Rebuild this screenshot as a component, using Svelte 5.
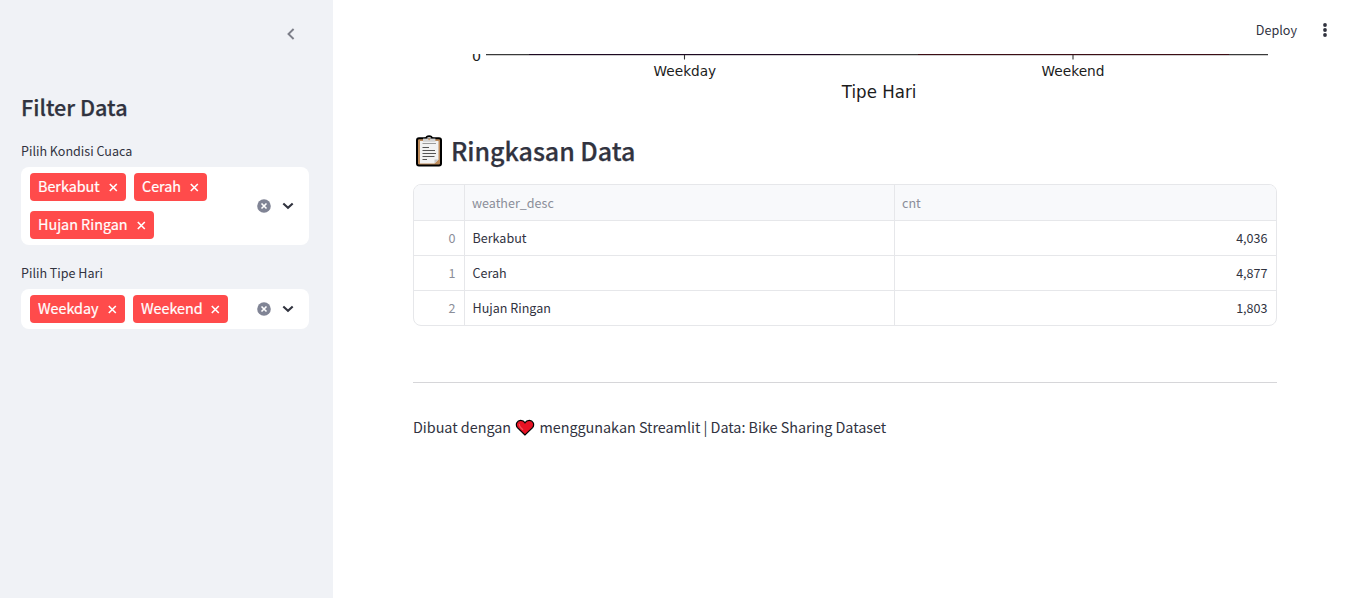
<script>
  const filters = [
    { label: 'Pilih Kondisi Cuaca', tags: [['Berkabut', 96], ['Cerah', 73], ['Hujan Ringan', 124]] },
    { label: 'Pilih Tipe Hari', tags: [['Weekday', 95], ['Weekend', 95]] }
  ];
  const rows = [
    ['Berkabut', '4,036'],
    ['Cerah', '4,877'],
    ['Hujan Ringan', '1,803']
  ];
</script>

<div class="app">
  <aside>
    <div class="collapse">
      <svg width="20" height="20" viewBox="0 0 20 20"><path d="M12.6 5 7.5 10l5.1 5" fill="none" stroke="#7d7f89" stroke-width="1.9" /></svg>
    </div>
    <h2>Filter Data</h2>
    {#each filters as f}
      <section class="filter">
        <div class="label">{f.label}</div>
        <div class="select">
          <div class="tags">
            {#each f.tags as [name, width]}
              <span class="tag" style="width: {width}px">
                <span>{name}</span>
                <svg width="9" height="9" viewBox="0 0 9 9"><path d="M.8 1l7 7M7.8 1l-7 7" stroke="#fff" stroke-width="1.6" /></svg>
              </span>
            {/each}
          </div>
          <svg class="clear" width="14" height="14" viewBox="0 0 14 14"><circle cx="7" cy="7" r="6.8" fill="#808495" /><path d="M4.5 4.5l5 5M9.5 4.5l-5 5" stroke="#fff" stroke-width="1.6" /></svg>
          <svg class="chevron" width="12" height="8" viewBox="0 0 12 8"><path d="M1.3 1.4 6 5.8l4.7-4.4" fill="none" stroke="#31333f" stroke-width="2.1" /></svg>
        </div>
      </section>
    {/each}
  </aside>

  <main>
    <header>
      <span>Deploy</span>
      <svg width="6" height="16" viewBox="0 0 6 16"><g fill="#31333f"><circle cx="3" cy="3" r="1.9" /><circle cx="3" cy="8" r="1.9" /><circle cx="3" cy="13" r="1.9" /></g></svg>
    </header>
    <div class="content">
      <svg class="chart" width="864" height="60" viewBox="413 54 864 60">
        <path d="M486 54.6H1268" stroke="#3a3a3a" stroke-width="1.2" />
        <path d="M529 54.5H840" stroke="#1d0822" />
        <path d="M918 54.5H1229" stroke="#3d0d14" />
        <path d="M684.5 55v4.6M1073 55v4.6" stroke="#333" stroke-width="1.1" />
        <g fill="#1c1c1c" font-family="DejaVu Sans, sans-serif" font-size="14.2">
          <text x="472" y="60.7">0</text>
          <text x="653.6" y="75.8" textLength="62.6" lengthAdjust="spacingAndGlyphs">Weekday</text>
          <text x="1041.5" y="75.8" textLength="63" lengthAdjust="spacingAndGlyphs">Weekend</text>
          <text x="841.8" y="97.8" font-size="17" textLength="74.6" lengthAdjust="spacingAndGlyphs">Tipe Hari</text>
        </g>
      </svg>

      <h3>
        <svg width="28" height="32" viewBox="0 0 28 32">
          <rect x="2" y="3.2" width="24" height="27.4" rx="2" fill="#bd8b5b" stroke="#000" stroke-width="2" />
          <path d="M5 6h18.5v18.5l-4 4H5z" fill="#f2f2f2" />
          <path d="M19.5 28.5v-4h4z" fill="#c8c8c8" />
          <path d="M9.5 3.4h1.6C11.4.4 16.8.4 17.1 3.4h1.4" fill="#c6c6c6" stroke="#000" stroke-width="1.7" />
          <rect x="8" y="3.6" width="12.4" height="3.2" fill="#d4d4d4" />
          <circle cx="14.2" cy="4.2" r="1" fill="#c69a6e" />
          <path d="M7.5 8.5h13.5" stroke="#9a9a9a" />
          <path d="M7.5 12.5h6.5M7.5 15.5h12.5M7.5 18.5h13.5M7.5 21.5h12M7.5 24.5h4.5" stroke="#555" />
        </svg>
        <span>Ringkasan Data</span>
      </h3>

      <div class="table">
        <div class="row head"><span></span><span>weather_desc</span><span>cnt</span></div>
        {#each rows as [name, count], i}
          <div class="row"><span class="index">{i}</span><span>{name}</span><span class="num">{count}</span></div>
        {/each}
      </div>

      <hr />
      <p>
        <span class="made">Dibuat dengan</span>
        <svg width="20" height="18" viewBox="0 0 20 18">
          <path d="M10 16 2.4 8.6C0 5.2 2.2 1.4 5.6 1.4 7.6 1.4 9.2 2.3 10 3.7c.8-1.4 2.4-2.3 4.4-2.3 3.4 0 5.6 3.8 3.2 7.2z" fill="#e81224" stroke="#000" stroke-width="1.2" />
          <path d="M4.4 4.8c-.6 2 1.4 4 3.6 6" fill="none" stroke="#f4505c" stroke-width="1.2" />
        </svg>
        <span class="using">menggunakan Streamlit | Data: Bike Sharing Dataset</span>
      </p>
    </div>
  </main>
</div>

<style>
  :global(body) { margin: 0; overflow: hidden; }
  .app {
    display: flex;
    width: 1363px;
    height: 598px;
    background: #fff;
    color: #31333f;
    font-family: "Noto Sans CJK SC", sans-serif;
    font-size: 14.4px;
  }
  svg { display: block; flex: none; }
  span { white-space: nowrap; }
  aside {
    box-sizing: border-box;
    width: 333px;
    padding: 24px 24px 0 21px;
    background: #f0f2f6;
  }
  .collapse { display: flex; justify-content: flex-end; padding-right: 8px; }
  h2 {
    margin: 47px 0 0;
    font-size: 21.6px;
    font-weight: 500;
    line-height: 32px;
    -webkit-text-stroke: 0.25px;
  }
  .filter { margin-top: 18px; }
  .label { font-size: 12.55px; line-height: 20px; margin: 0 0 6px; }
  .select {
    display: flex;
    align-items: center;
    box-sizing: border-box;
    padding: 6px 15px 6px 9px;
    background: #fff;
    border-radius: 8px;
  }
  .tags { display: flex; flex: 1; flex-wrap: wrap; gap: 10px 8px; }
  .tag {
    display: flex;
    align-items: center;
    justify-content: space-between;
    box-sizing: border-box;
    height: 28px;
    padding: 0 8px;
    border-radius: 4px;
    background: #ff4b4b;
    color: #fff;
    line-height: 26px;
    -webkit-text-stroke: 0.2px;
  }
  .tag > span { height: 28px; letter-spacing: -0.03px; }
  .clear { margin-right: 11px; }
  main { flex: 1; }
  header {
    display: flex;
    align-items: center;
    justify-content: flex-end;
    gap: 25px;
    height: 54px;
    padding: 6px 35px 0 0;
    box-sizing: border-box;
    font-size: 12.6px;
  }
  header span { padding-bottom: 2px; }
  .content { padding: 0 86px 0 80px; }
  h3 {
    display: flex;
    align-items: center;
    gap: 8px;
    height: 36px;
    margin: 19px 0 15px;
    padding-left: 2px;
    font-size: 25px;
    font-weight: 500;
    line-height: 34px;
    letter-spacing: -0.04px;
    -webkit-text-stroke: 0.25px;
  }
  h3 span { height: 36px; }
  .table {
    box-sizing: border-box;
    width: 864px;
    height: 142px;
    border: 1px solid #e6e7ea;
    border-radius: 8px;
    overflow: hidden;
    font-size: 12.55px;
  }
  .row {
    display: grid;
    grid-template-columns: 51px 430px 1fr;
    height: 35px;
    line-height: 34px;
  }
  .row + .row { box-shadow: inset 0 1px #e6e7ea; }
  .row > span { padding: 1px 8.5px 0 7.5px; }
  .row > span + span { border-left: 1px solid #e6e7ea; margin-left: -1px; }
  .head { background: #f8f9fb; color: #8b8e99; }
  .head > span { padding-left: 7px; }
  .row > .index { color: #8b8e99; text-align: right; padding-right: 9.5px; }
  .num { text-align: right; }
  hr { height: 1px; margin: 56px 0 32px; border: 0; background: #d6d6d9; }
  p { display: flex; align-items: center; gap: 4px; height: 24px; margin: 0; line-height: 24px; }
  p svg { margin-top: 1px; }
  .made { letter-spacing: -0.03px; }
  .using { letter-spacing: -0.03px; padding-left: 0.4px; }
</style>
